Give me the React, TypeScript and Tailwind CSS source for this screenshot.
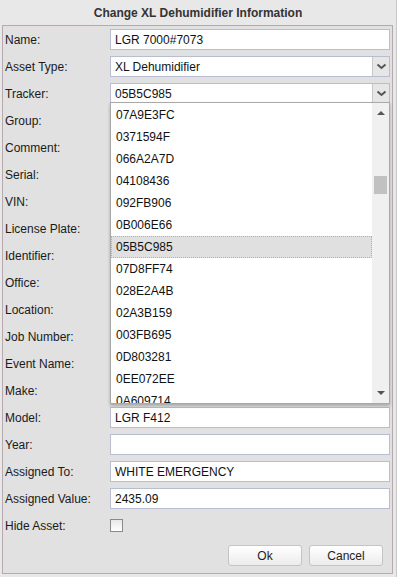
import React from "react";

const font = { fontFamily: '"Liberation Sans", Arial, sans-serif' };

type Row = { label: string; value?: string; kind?: "text" | "select" | "check" | "none" };

const rows: Row[] = [
  { label: "Name:", value: "LGR 7000#7073" },
  { label: "Asset Type:", value: "XL Dehumidifier", kind: "select" },
  { label: "Tracker:", value: "05B5C985", kind: "select" },
  { label: "Group:", kind: "none" },
  { label: "Comment:", kind: "none" },
  { label: "Serial:", kind: "none" },
  { label: "VIN:", kind: "none" },
  { label: "License Plate:", kind: "none" },
  { label: "Identifier:", kind: "none" },
  { label: "Office:", kind: "none" },
  { label: "Location:", kind: "none" },
  { label: "Job Number:", kind: "none" },
  { label: "Event Name:", kind: "none" },
  { label: "Make:", kind: "none" },
  { label: "Model:", value: "LGR F412" },
  { label: "Year:", value: "" },
  { label: "Assigned To:", value: "WHITE EMERGENCY" },
  { label: "Assigned Value:", value: "2435.09" },
  { label: "Hide Asset:", kind: "check" },
];

const trackers = [
  "07A9E3FC",
  "0371594F",
  "066A2A7D",
  "04108436",
  "092FB906",
  "0B006E66",
  "05B5C985",
  "07D8FF74",
  "028E2A4B",
  "02A3B159",
  "003FB695",
  "0D803281",
  "0EE072EE",
  "0A609714",
];

function Chevron() {
  return (
    <svg width="11" height="7" viewBox="0 0 11 7">
      <path d="M1.5 1.5 L5.5 5 L9.5 1.5" stroke="#555" strokeWidth="2" fill="none" />
    </svg>
  );
}

function Field({ row }: { row: Row }) {
  const kind = row.kind ?? "text";
  if (kind === "none") return null;
  if (kind === "check") {
    return <div className="w-[13px] h-[13px] border border-[#8a8a8a] bg-gradient-to-b from-[#e8e8e8] to-white" />;
  }
  return (
    <div className="flex-1 h-[21px] flex items-center border border-[#b9bdd0] bg-white">
      <div className="flex-1 pl-[4px] text-[12px] text-[#111] truncate">{row.value}</div>
      {kind === "select" && (
        <div className="w-[17px] h-full flex items-center justify-center bg-[#e6e6e6] border-l border-[#c8c8c8]">
          <Chevron />
        </div>
      )}
    </div>
  );
}

export default function App() {
  return (
    <div className="relative w-[397px] h-[577px] bg-[#e8e8e8] border-r border-[#c8c8c8] overflow-hidden" style={font}>
      <div className="h-[25px] flex items-center justify-center text-[12px] font-bold text-[#333]">
        Change XL Dehumidifier Information
      </div>
      <div className="ml-[2px] w-[391px] h-[549px] border border-[#b5aaad] bg-[#e1e1e1] pl-[2px] pr-[2px] flex flex-col">
        {rows.map((r) => (
          <div key={r.label} className="h-[27px] flex items-center">
            <div className="w-[105px] text-[12px] text-[#1a1a1a]">{r.label}</div>
            <Field row={r} />
          </div>
        ))}
        <div className="mt-[6px] flex justify-end gap-[7px] pr-[7px]">
          <button className="w-[74px] h-[21px] rounded-[3px] border border-[#c4c4c4] bg-gradient-to-b from-white to-[#ececec] text-[12px] text-[#222]">
            Ok
          </button>
          <button className="w-[74px] h-[21px] rounded-[3px] border border-[#c4c4c4] bg-gradient-to-b from-white to-[#ececec] text-[12px] text-[#222]">
            Cancel
          </button>
        </div>
      </div>

      {/* tracker dropdown list */}
      <div className="absolute left-[110px] top-[102px] w-[280px] h-[302px] border border-[#a9a9a9] bg-white shadow-[0_2px_3px_rgba(0,0,0,0.25)] flex overflow-hidden">
        <div className="flex-1 pt-[1px] overflow-hidden">
          {trackers.map((t) => (
            <div
              key={t}
              className={
                t === "05B5C985"
                  ? "h-[22px] flex items-center pl-[4px] text-[12px] text-[#111] bg-[#e0e0e0] border border-dotted border-[#b0b0b0]"
                  : "h-[22px] flex items-center pl-[5px] text-[12px] text-[#111]"
              }
            >
              {t}
            </div>
          ))}
        </div>
        <div className="w-[17px] bg-[#f0f0f0] flex flex-col items-center">
          <div className="h-[20px] flex items-center justify-center">
            <svg width="8" height="4" viewBox="0 0 8 4">
              <path d="M0 4 L4 0 L8 4 Z" fill="#555" />
            </svg>
          </div>
          <div className="mt-[53px] w-[13px] h-[18px] bg-[#c1c1c1]" />
          <div className="flex-1" />
          <div className="h-[20px] flex items-center justify-center">
            <svg width="8" height="4" viewBox="0 0 8 4">
              <path d="M0 0 L8 0 L4 4 Z" fill="#555" />
            </svg>
          </div>
        </div>
      </div>
    </div>
  );
}
